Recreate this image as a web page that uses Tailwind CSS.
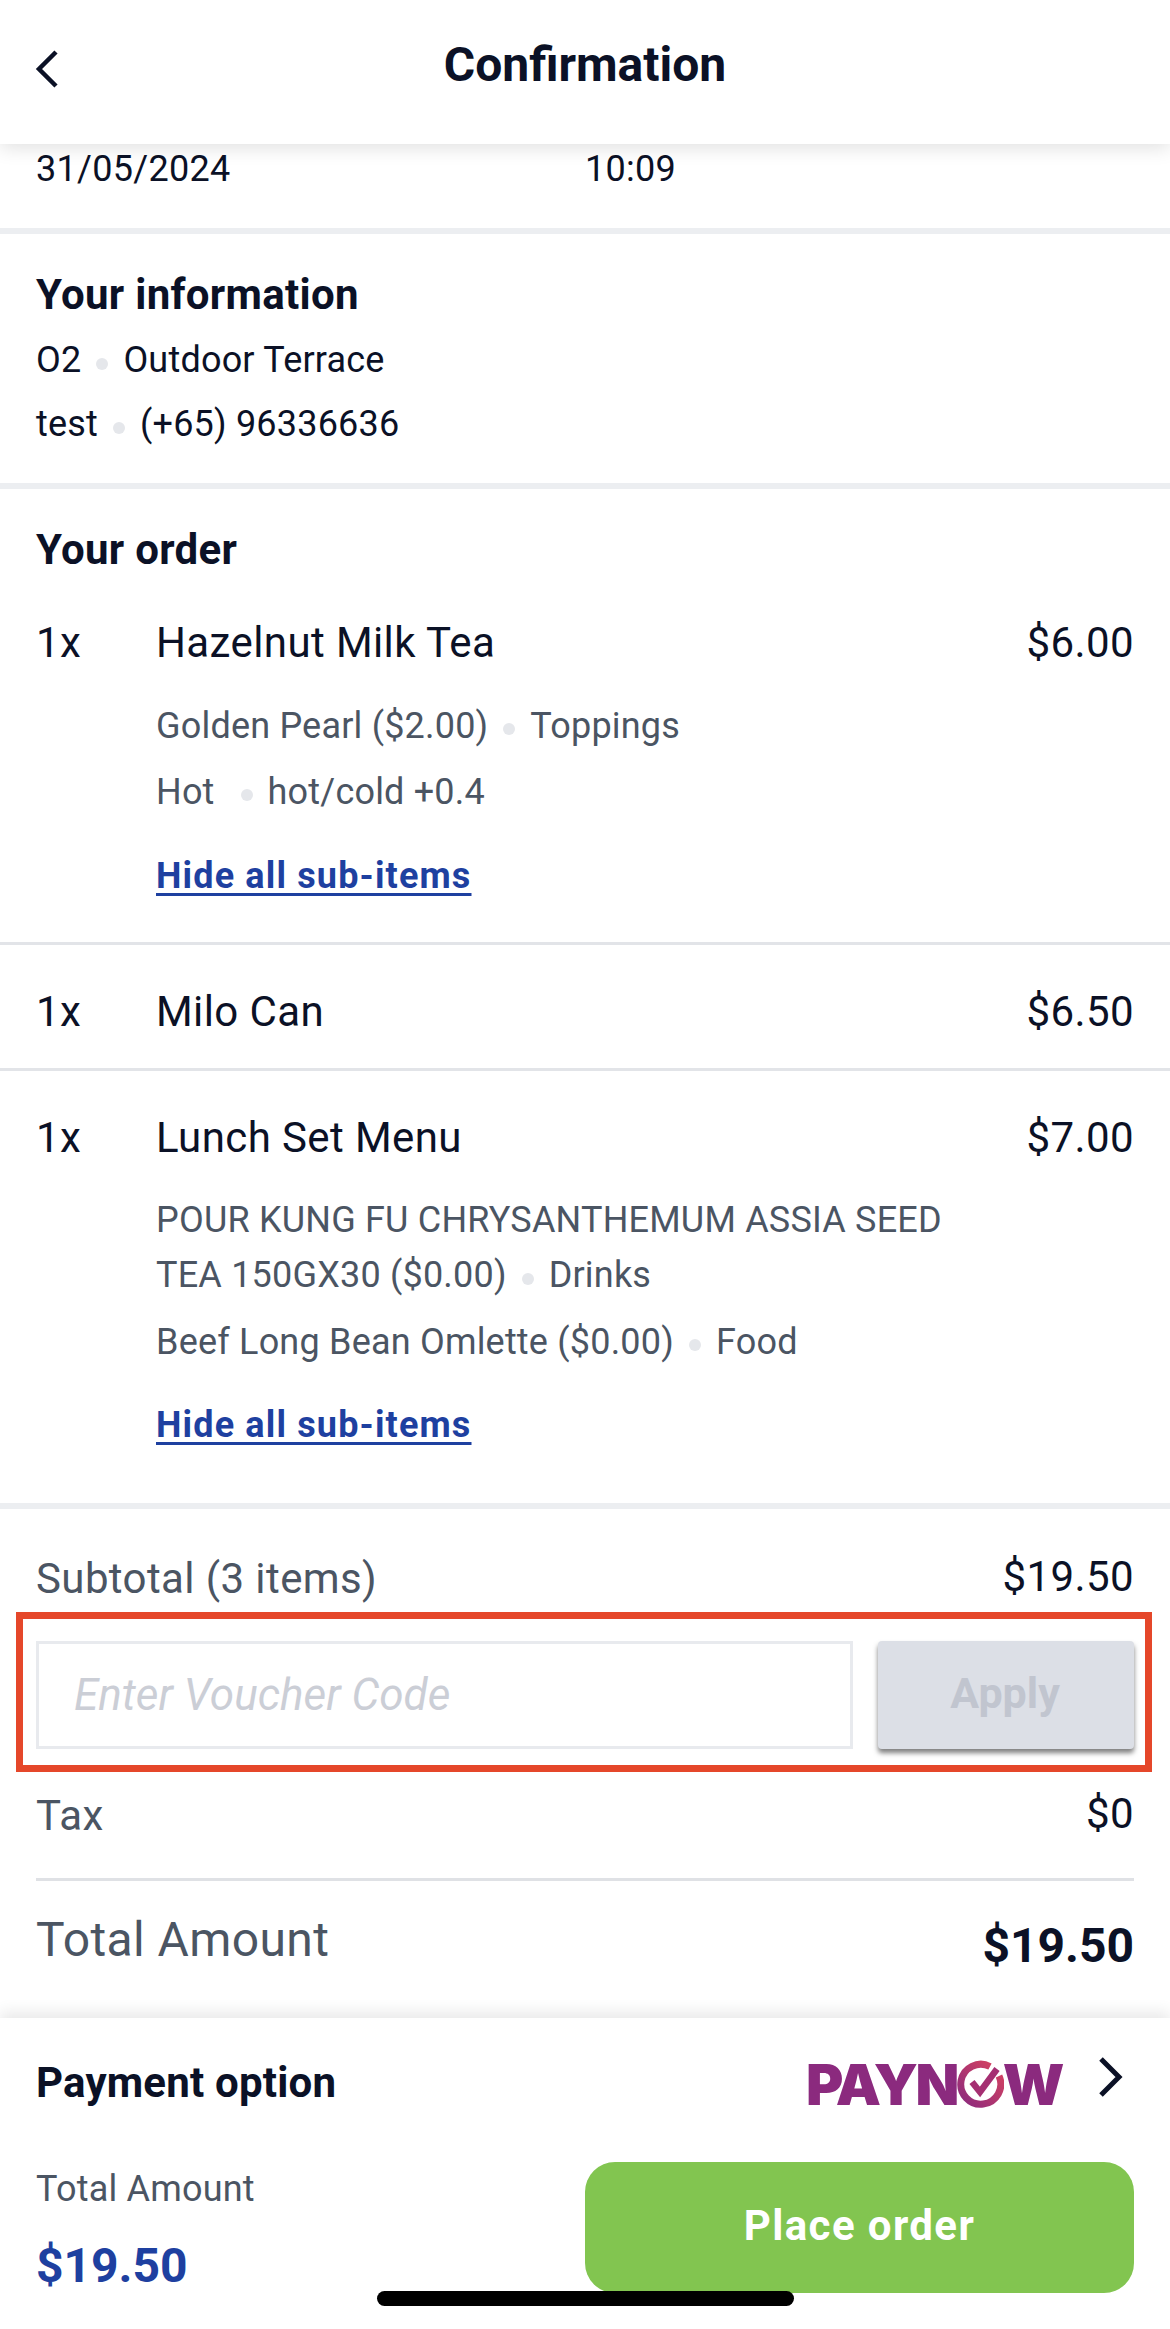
<!DOCTYPE html>
<html lang="en">
<head>
  <meta charset="UTF-8" />
  <title>Confirmation</title>
  <script src="https://cdn.jsdelivr.net/npm/@tailwindcss/browser@4"></script>
</head>
<body class="bg-white">
  <div class="relative w-[1170px] h-[2329px] overflow-hidden font-['Roboto',sans-serif] text-[#0b1126] flex flex-col">
    <!-- header -->
    <header class="relative z-10 h-[144px] shrink-0 bg-white shadow-[0_4px_18px_rgba(0,0,0,0.12)] flex items-center justify-center">
      <svg class="absolute left-[34px] top-[48px]" width="26" height="42" viewBox="0 0 26 42" fill="none" stroke="#0b1126" stroke-width="4.5"><path d="M22 4 L5 21 L22 38"/></svg>
      <h1 class="text-[48px] font-bold -mt-[14px]">Confirmation</h1>
    </header>

    <main class="flex-1 overflow-hidden">
      <!-- date -->
      <section class="h-[84px] px-[36px] pt-[3px] flex text-[36px] tracking-[0.3px] leading-[44px]">
        <span class="w-[549px]">31/05/2024</span>
        <span>10:09</span>
      </section>
      <div class="h-[6px] bg-[#eceef1]"></div>

      <!-- info -->
      <section class="h-[249px] px-[36px] pt-[37px]">
        <h2 class="text-[42px] font-bold tracking-[0.3px] leading-[48px]">Your information</h2>
        <div class="flex items-center text-[36px] tracking-[0.2px] leading-[50px] mt-[16px]">O2<span class="w-[12px] h-[12px] rounded-full bg-[#e5e7eb] mx-[15px] mt-[8px]"></span>Outdoor Terrace</div>
        <div class="flex items-center text-[36px] tracking-[0.2px] leading-[50px] mt-[14px]">test<span class="w-[12px] h-[12px] rounded-full bg-[#e5e7eb] mx-[15px] mt-[8px]"></span>(+65) 96336636</div>
      </section>
      <div class="h-[6px] bg-[#eceef1]"></div>

      <!-- order -->
      <section class="h-[1014px]">
        <div class="px-[36px] pt-[37px]">
          <h2 class="text-[42px] font-bold tracking-[0.3px] leading-[48px]">Your order</h2>
        </div>

        <div class="px-[36px] pt-[41px] pb-[41px] border-b-[3px] border-[#e2e4e8]">
          <div class="flex text-[42px] tracking-[0.4px] leading-[56px]">
            <span class="w-[120px]">1x</span>
            <span class="flex-1">Hazelnut Milk Tea</span>
            <span>$6.00</span>
          </div>
          <div class="pl-[120px] text-[36px] tracking-[0.2px] text-[#4b5563]">
            <div class="flex items-center leading-[50px] mt-[30px]">Golden Pearl ($2.00)<span class="w-[12px] h-[12px] rounded-full bg-[#e5e7eb] mx-[15px] mt-[6px]"></span>Toppings</div>
            <div class="flex items-center leading-[50px] mt-[16px]">Hot<span class="w-[12px] h-[12px] rounded-full bg-[#e5e7eb] ml-[26px] mr-[15px] mt-[6px]"></span>hot/cold +0.4</div>
            <a class="block mt-[34px] leading-[50px] tracking-[1.15px] font-bold text-[#1e40a0] underline decoration-[3px] underline-offset-[5px]">Hide all sub-items</a>
          </div>
        </div>

        <div class="px-[36px] h-[126px] border-b-[3px] border-[#e2e4e8] flex items-center text-[42px] tracking-[0.4px] pt-[9px]">
          <span class="w-[120px]">1x</span>
          <span class="flex-1">Milo Can</span>
          <span>$6.50</span>
        </div>

        <div class="px-[36px] pt-[39px]">
          <div class="flex text-[42px] tracking-[0.4px] leading-[56px]">
            <span class="w-[120px]">1x</span>
            <span class="flex-1">Lunch Set Menu</span>
            <span>$7.00</span>
          </div>
          <div class="pl-[120px] text-[36px] tracking-[0.2px] text-[#4b5563]">
            <div class="leading-[55px] mt-[27px]">POUR KUNG FU CHRYSANTHEMUM ASSIA SEED</div>
            <div class="flex items-center leading-[55px]">TEA 150GX30 ($0.00)<span class="w-[12px] h-[12px] rounded-full bg-[#e5e7eb] mx-[15px] mt-[6px]"></span>Drinks</div>
            <div class="flex items-center leading-[50px] mt-[14px]">Beef Long Bean Omlette ($0.00)<span class="w-[12px] h-[12px] rounded-full bg-[#e5e7eb] mx-[15px] mt-[6px]"></span>Food</div>
            <a class="block mt-[33px] leading-[50px] tracking-[1.15px] font-bold text-[#1e40a0] underline decoration-[3px] underline-offset-[5px]">Hide all sub-items</a>
          </div>
        </div>
      </section>
      <div class="h-[6px] bg-[#eceef1]"></div>

      <!-- totals -->
      <section class="relative">
        <div class="px-[36px] pt-[46px] h-[103px] flex justify-between">
          <span class="text-[42px] tracking-[0.4px] leading-[48px] text-[#4b5563]">Subtotal (3 items)</span>
          <span class="text-[42px] tracking-[0.4px] leading-[44px]">$19.50</span>
        </div>
        <div class="ml-[16px] mr-[18px] h-[160px] border-[7px] border-[#e5472a] pl-[13px] pr-[11px] pt-[22px] pb-[16px] flex gap-[25px]">
          <div class="flex-1 border-[3px] border-[#e8eaee] flex items-center pl-[35px] text-[44px] italic text-[#cbced6]">Enter Voucher Code</div>
          <button class="w-[256px] rounded-[4px] bg-[#dcdfe6] shadow-[0_4px_5px_rgba(0,0,0,0.5)] text-[43px] font-bold text-[#c1c5cf] pb-[4px] pr-[2px]">Apply</button>
        </div>
        <div class="px-[36px] pt-[20px] h-[106px] flex justify-between">
          <span class="text-[42px] tracking-[0.4px] leading-[48px] text-[#4b5563]">Tax</span>
          <span class="text-[42px] tracking-[0.4px] leading-[44px]">$0</span>
        </div>
        <div class="mx-[36px] h-[3px] bg-[#dfe1e5]"></div>
        <div class="px-[36px] pt-[25px] flex justify-between items-center">
          <span class="text-[48px] tracking-[0.4px] leading-[56px] text-[#4b5563]">Total Amount</span>
          <span class="text-[48px] leading-[56px] font-bold mt-[12px]">$19.50</span>
        </div>
      </section>
    </main>

    <!-- footer -->
    <footer class="relative z-10 h-[311px] shrink-0 bg-white shadow-[0_-6px_14px_rgba(0,0,0,0.09)] px-[36px]">
      <div class="flex items-start justify-between pt-[40px] h-[144px]">
        <span class="text-[42px] tracking-[0.2px] leading-[50px] font-bold">Payment option</span>
        <div class="flex items-start mr-[10px]">
          <div class="flex items-center h-[48px] mt-[2px] text-[57px] font-black font-['Inter',sans-serif] text-[#8b2a7e] tracking-[-2.5px] leading-none">
            <span>PAYN</span>
            <svg class="-mx-[1px]" width="48" height="48" viewBox="0 0 48 48" fill="none">
              <defs><linearGradient id="pn" x1="0" y1="1" x2="1" y2="0"><stop offset="0" stop-color="#8b2a7e"/><stop offset="1" stop-color="#d8435f"/></linearGradient></defs>
              <path d="M34 6.5 A20 20 0 1 0 43 16" stroke="url(#pn)" stroke-width="7"/>
              <path d="M16 22 L24 32 L41 9" stroke="#a52f72" stroke-width="6.5"/>
            </svg>
            <span>W</span>
          </div>
          <svg class="ml-[34px] -mt-[2px]" width="28" height="42" viewBox="0 0 28 42" fill="none" stroke="#0b1126" stroke-width="5"><path d="M5 3 L23 21 L5 39"/></svg>
        </div>
      </div>
      <div class="flex justify-between">
        <div class="pt-[5px]">
          <div class="text-[36px] tracking-[0.2px] leading-[44px] text-[#4b5563]">Total Amount</div>
          <div class="text-[48px] leading-[56px] font-bold text-[#1e40a0] mt-[27px]">$19.50</div>
        </div>
        <button class="w-[549px] h-[131px] rounded-[30px] bg-[#82c550] text-white text-[42px] font-bold tracking-[1.4px] pb-[4px]">Place order</button>
      </div>
    </footer>

    <div class="absolute z-20 left-[377px] top-[2291px] w-[417px] h-[15px] rounded-full bg-black"></div>
  </div>
</body>
</html>
